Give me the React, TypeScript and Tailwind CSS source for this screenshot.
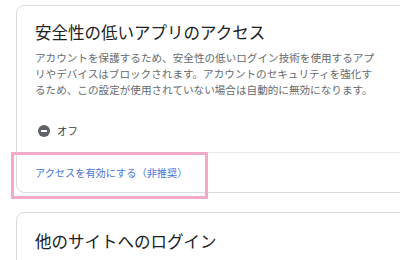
import { useState } from 'react';

const jpFont = { fontFamily: '"Noto Sans CJK JP", "Noto Sans", sans-serif' };

function OffIcon() {
  return (
    <svg width="12" height="12" viewBox="0 0 12 12" className="shrink-0">
      <circle cx="6" cy="6" r="6" fill="#5f6368" />
      <rect x="3" y="5.1" width="6" height="1.8" rx="0.4" fill="#ffffff" />
    </svg>
  );
}

export default function App() {
  const [enabled] = useState(false);

  return (
    <div className="w-[400px] h-[260px] overflow-hidden bg-white" style={jpFont}>
      <div className="pt-[5px] pl-4">
        {/* 安全性の低いアプリのアクセス */}
        <div className="w-[420px] border border-[#dadce0] rounded-lg">
          <div className="pt-[12px] pb-[13px] px-[18px]">
            <h2 className="text-[16.5px] leading-[28px] text-[#202124]">
              安全性の低いアプリのアクセス
            </h2>
            <p className="mt-1 text-[10.6px] leading-4 text-[#666a6e]">
              アカウントを保護するため、安全性の低いログイン技術を使用するアプ
              <br />
              リやデバイスはブロックされます。アカウントのセキュリティを強化す
              <br />
              るため、この設定が使用されていない場合は自動的に無効になります。
            </p>
            <div className="mt-[25px] flex items-center gap-[7px] h-4 pl-[3px]">
              <OffIcon />
              <span className="text-[10.4px] text-[#3c4043]">{enabled ? 'オン' : 'オフ'}</span>
            </div>
          </div>
          <div className="relative border-t border-[#e8eaed] h-10 flex items-center px-[18px]">
            <a className="text-[10.2px] text-[#4a74d9] cursor-pointer">
              アクセスを有効にする（非推奨）
            </a>
            {/* 注釈の枠 */}
            <div className="absolute -left-[6px] -top-[1px] w-[197px] h-[47px] border-[3px] border-[#f3a9c8] pointer-events-none" />
          </div>
        </div>

        {/* 他のサイトへのログイン */}
        <div className="mt-[19px] w-[420px] h-[80px] border border-[#dadce0] rounded-lg">
          <div className="pt-[14px] px-[18px]">
            <h2 className="text-[16.5px] leading-[28px] text-[#202124]">他のサイトへのログイン</h2>
          </div>
        </div>
      </div>
    </div>
  );
}
